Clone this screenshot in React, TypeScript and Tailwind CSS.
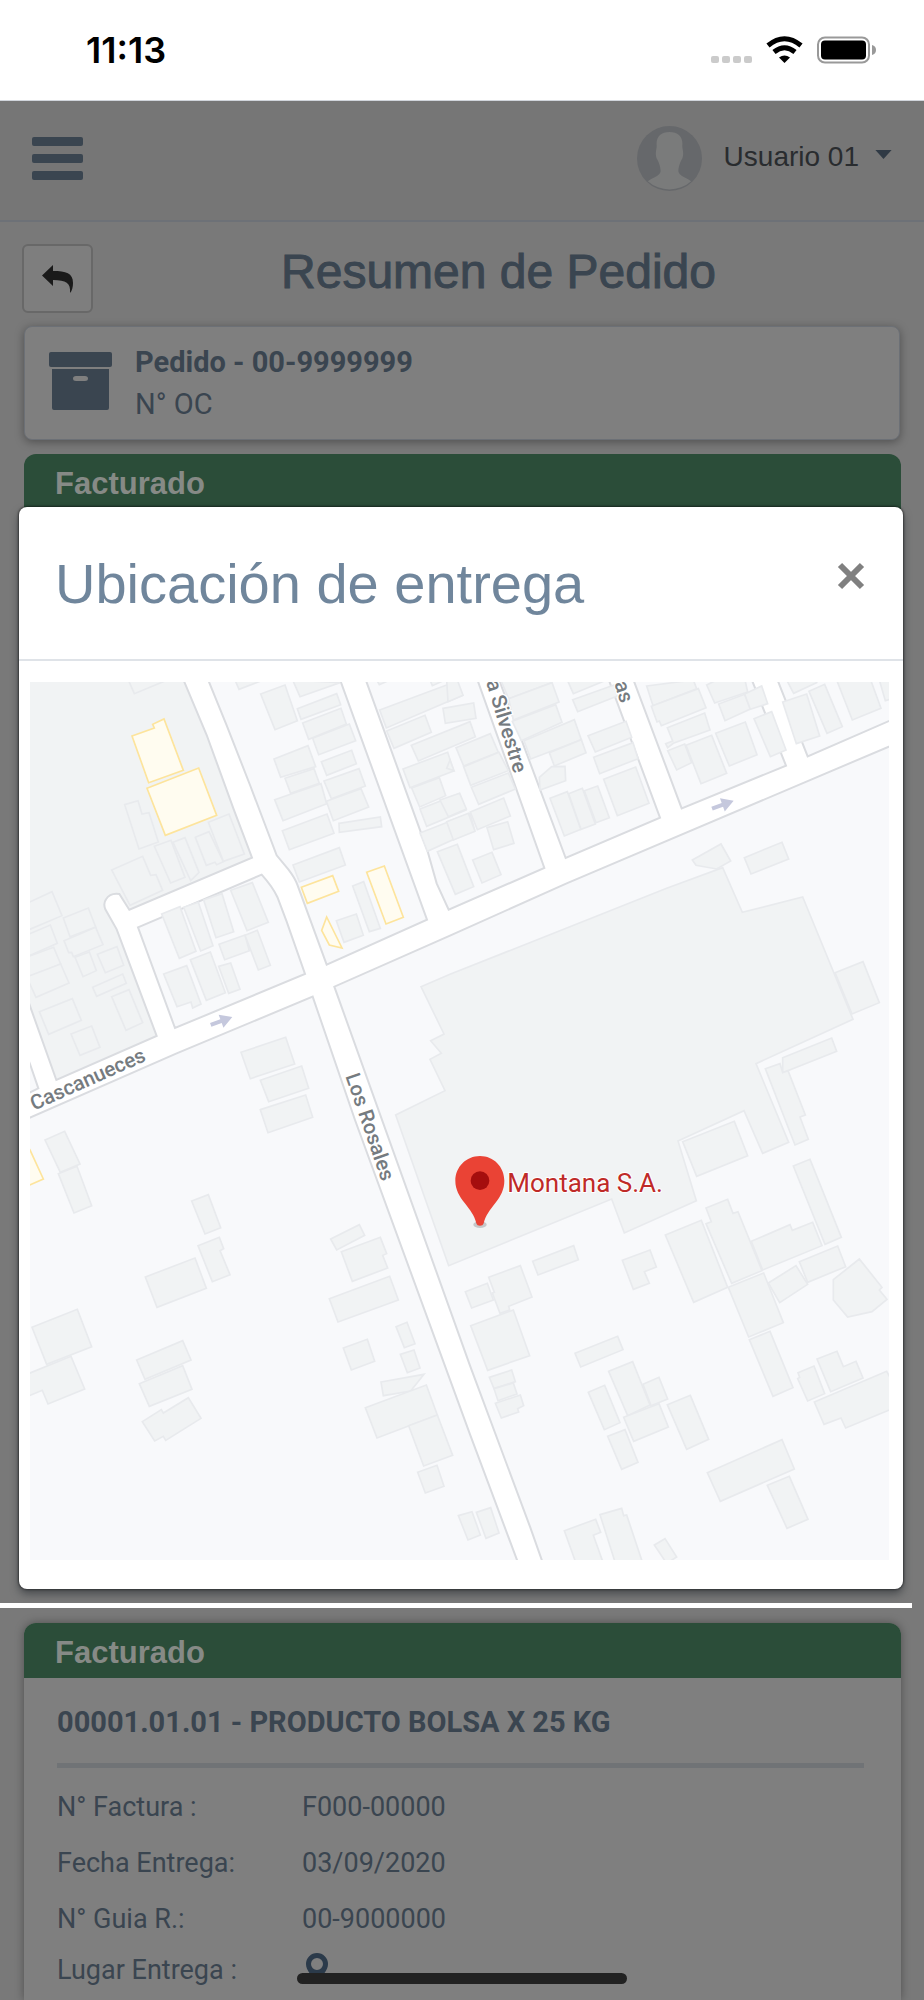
import React from 'react';

// Street blocks of the map; the white between them is the road surface
const blocks = [
  'M-10 -10H460L463 0L530 159L610 379L666 527L298 683L268 636Q240 632 228 652Q219 664 226 682L260 742L380 1062L79 1194L-10 944Z',
];

const lots = [
  'M-10 1120L0 1146L25 1219L-10 1236Z',
  'M324 736L695 578Q728 615 742 645L770 719L825 876L435 1038Z',
  'M533 -10L590 130L660 309L740 520L775 562Q795 588 802 608L890 848L1191 713L929 -10Z',
  'M1006 -10L1192 505L1220 604L1256 683L1543 558L1341 -10Z',
  'M1406 -10L1607 528L1890 407L1735 -10Z',
  'M1809 -10L1955 379L2268 251L2164 -10Z',
  'M2241 -10L2333 223L2600 107V-10Z',
  'M2600 184L1610 604L1260 761L913 914L1320 2051L1500 2534L1541 2650H2600Z',
  'M-10 1311L440 1114L848 944L975 1314L1320 2257L1467 2650H-10Z',
];

const compound =
  'M1173 914L1260 877L1910 619L2078 557L2137 691L2318 645L2469 1012L2178 1145L2276 1381L2198 1414L2142 1286L1944 1377L1999 1556L1783 1653L1745 1551L1256 1751L1097 1299L1245 1226L1200 1132L1234 1114L1202 1076L1242 1056Z';

// Buildings are grouped in four tiles, each one with its own origin
const tiles = [
  {
    x: -30,
    y: -36,
    shapes: [
      'M325 30L343 71L435 33Z',
      'M722 72L795 45L832 152L765 179Z',
      'M645 30L657 58L725 32Z',
      'M818 30L840 80L960 38Z',
      'M832 116L950 71L962 104L843 148Z',
      'M848 159L963 115L979 162L866 208Z',
      'M878 205L988 162L1007 212L896 254Z',
      'M762 267L864 227L887 290L782 322Z',
      'M795 325L882 296L898 340L812 370Z',
      'M904 275L995 241L1009 281L920 316Z',
      'M912 333L1017 296L1036 348L934 386Z',
      'M764 389L903 341L920 401L789 452Z',
      'M919 394L1023 356L1046 411L940 452Z',
      'M787 482L921 432L942 490L808 539Z',
      'M957 460L1081 441L1085 470L958 487Z',
      'M819 585L958 533L976 585L838 636Z',
      'M998 648L1031 635L1081 775L1048 785Z',
      'M949 752L1009 732L1030 796L972 817Z',
      'M314 404L354 392L366 432L387 428L415 516L357 537Z',
      'M275 600L368 559L392 616L408 614L428 661L330 706Z',
      'M403 529L453 511L495 622L452 639Z',
      'M459 517L495 503L537 607L519 625L512 632Z',
      'M526 502L567 485L610 575L590 584L585 577L559 586Z',
      'M565 457L627 432L673 552L610 574Z',
      'M20 700L96 665L126 737L20 782Z',
      'M130 744L205 714L227 771L150 800Z',
      'M20 795L91 765L112 820L20 861Z',
      'M132 812L227 772L249 824L160 860L155 847L146 848Z',
      'M20 861L101 832L122 882L20 923Z',
      'M20 921L122 882L147 939L48 982Z',
      'M165 862L208 846L229 902L189 920Z',
      'M232 853L291 830L311 886L256 908Z',
      'M218 952L308 912L319 940L230 979Z',
      'M58 1025L157 986L184 1051L86 1093Z',
      'M275 980L327 959L368 1058L318 1081Z',
      'M153 1092L215 1068L240 1132L180 1156Z',
      'M425 732L480 710L528 844L478 865Z',
      'M491 712L535 697L579 827L542 843Z',
      'M551 690L606 671L641 785L588 803Z',
      'M632 661L697 638L745 757L681 782Z',
      'M597 823L675 795L688 842L614 869Z',
      'M675 796L712 781L751 886L715 900Z',
      'M431 912L500 887L543 1002L518 1014L513 996L471 1010Z',
      'M511 869L571 846L616 968L559 991Z',
      'M596 889L632 879L660 958L626 970Z',
      'M663 1147L797 1102L824 1182L691 1226Z',
      'M721 1231L845 1188L866 1255L746 1295Z',
      'M721 1319L857 1275L878 1342L744 1388Z',
      'M1070 30L1078 44L1110 30Z',
      'M1079 120L1310 34L1328 76L1099 174Z',
      'M1100 183L1215 136L1234 187L1122 235Z',
      'M1174 226L1350 155L1366 200L1195 273Z',
      'M1149 297L1283 247L1301 303L1170 353Z',
      'M1175 354L1258 323L1277 377L1199 411Z',
      'M1200 417L1318 371L1338 420L1220 469Z',
      'M1200 489L1282 457L1302 508L1222 544Z',
      'M1282 455L1350 430L1364 480L1302 508Z',
      'M1252 545L1312 523L1361 650L1306 673Z',
      'M1230 30L1237 47L1275 30Z',
    ],
  },
  {
    x: 1260,
    y: -36,
    shapes: [
      'M-10 30H22L39 76L-6 95Z',
      'M-21 115L71 99L78 145L-14 160Z',
      'M-10 295L0 270L12 302Z',
      'M18 233L121 191L145 247L41 288Z',
      'M41 290L147 247L175 302L62 346Z',
      'M64 352L175 309L196 357L86 403Z',
      'M61 426L161 384L181 438L82 479Z',
      'M-30 390L29 370L49 417L-5 440Z',
      'M-10 455L55 430L75 484L10 510Z',
      'M111 473L173 455L192 520L131 539Z',
      'M68 570L126 547L153 614L96 639Z',
      'M152 30H300L305 38L176 86Z',
      'M176 86L306 38L327 96L190 150Z',
      'M187 154L317 104L336 157L214 212Z',
      'M222 212L373 149L394 209L242 267Z',
      'M298 248L394 209L408 248L313 288Z',
      'M268 322L305 290L345 289L347 332L270 360Z',
      'M352 30L370 71L470 30Z',
      'M368 89L492 45L502 78L383 125Z',
      'M414 197L528 154L545 202L436 246Z',
      'M431 262L549 218L564 266L449 311Z',
      'M300 385L352 365L393 478L343 498Z',
      'M356 371L397 355L436 462L393 478Z',
      'M403 362L443 348L478 443L438 458Z',
      'M461 328L557 291L597 400L502 437Z',
      'M590 48L730 30L740 56L609 107Z',
      'M604 109L745 56L768 113L634 167L628 153L621 156Z',
      'M652 173L764 129L780 180L670 220L653 233L647 221L668 213Z',
      'M653 242L704 222L725 278L680 300Z',
      'M708 226L785 196L830 310L753 341Z',
      'M797 190L886 156L921 254L838 288Z',
      'M770 45L800 30H885L893 66L794 99Z',
      'M806 102L884 73L901 117L825 152Z',
      'M884 72L935 48L953 101L901 118Z',
      'M912 146L965 125L1008 240L961 260Z',
      'M998 96L1070 72L1109 198L1039 221Z',
      'M1077 64L1124 43L1177 170L1131 190Z',
      'M1010 30L1031 70L1100 38L1095 30Z',
      'M1160 30H1262L1293 115L1207 150Z',
      'M1288 30L1306 92L1330 85V30Z',
      'M727 570L813 522L842 573L800 597L738 586Z',
      'M883 563L996 517L1016 567L903 612Z',
      'M1155 908L1239 875L1288 998L1206 1032Z',
      'M998 1163L1145 1104L1160 1144L998 1208Z',
      'M946 1196L990 1181L998 1208L1014 1202L1066 1335L1050 1341L1075 1408L1035 1425Z',
    ],
  },
  {
    x: -30,
    y: 1254,
    shapes: [
      'M75 120L134 94L180 192L121 217Z',
      'M115 221L171 199L215 317L162 339Z',
      'M515 303L565 284L602 383L555 402Z',
      'M534 437L598 412L611 446L600 452L630 524L577 545Z',
      'M376 531L525 474L559 565L411 622Z',
      'M36 682L172 628L215 740L80 793Z',
      'M20 823L153 769L194 867L84 912L67 871L20 890Z',
      'M350 780L488 722L513 780L375 838Z',
      'M358 851L488 797L516 868L388 919Z',
      'M367 965L424 929L430 939L505 893L543 955L437 1021L430 1009L404 1023Z',
      'M932 417L1018 374L1034 406L950 450Z',
      'M964 455L1081 412L1100 461L1088 466L1103 504L997 544Z',
      'M928 596L1109 529L1135 600L954 666Z',
      'M970 744L1042 718L1064 784L994 810Z',
      'M1128 680L1161 667L1185 731L1153 743Z',
      'M1141 763L1182 750L1200 804L1162 818Z',
      'M1083 846L1212 823L1172 873L1090 887Z',
      'M1036 923L1219 855L1252 945L1071 1014Z',
      'M1166 977L1252 945L1298 1066L1211 1098Z',
      'M1193 1117L1251 1096L1272 1159L1216 1179Z',
    ],
  },
  {
    x: 1260,
    y: 1254,
    shapes: [
      'M698 125L853 64L893 167L740 229Z',
      'M1030 198L1080 178L1174 412L1125 433Z',
      'M768 324L833 298L849 340L864 335L936 512L845 550L768 371L784 365Z',
      'M904 424L1020 374L1027 391L1088 367L1116 437L938 510Z',
      'M646 405L754 361L833 562L731 607Z',
      'M248 484L371 437L385 479L264 525Z',
      'M517 481L600 450L619 501L583 515L598 550L550 568Z',
      'M46 575L112 550L130 600L65 624Z',
      'M116 532L211 497L246 591L176 619L179 630L150 640L127 579L133 577Z',
      'M62 677L190 630L239 767L113 811Z',
      'M118 832L185 810L196 845L132 866Z',
      'M132 866L190 849L201 882L144 902Z',
      'M136 910L211 885L221 917L203 926L206 936L154 954Z',
      'M375 760L503 709L519 749L392 801Z',
      'M835 562L941 519L1000 668L896 711Z',
      'M955 549L1038 497L1073 553L989 608Z',
      'M1048 485L1163 438L1187 500L1073 547Z',
      'M1150 539L1228 477L1296 562L1288 570L1311 598L1266 635L1193 651L1150 600Z',
      'M898 719L960 694L1029 863L969 889Z',
      'M1101 777L1161 754L1180 800L1218 784L1239 834L1142 875Z',
      'M1044 818L1092 798L1124 881L1073 903L1043 836L1049 832Z',
      'M1093 906L1310 814L1330 850V925L1187 984L1173 954L1122 973Z',
      'M415 877L464 856L510 968L463 989Z',
      'M476 814L548 785L600 915L533 947Z',
      'M579 853L627 832L653 897L603 917Z',
      'M521 952L627 911L655 981L551 1024Z',
      'M652 914L721 886L776 1018L710 1048Z',
      'M473 1009L525 989L564 1087L515 1108Z',
      'M772 1118L996 1019L1033 1107L811 1204Z',
      'M952 1156L1018 1129L1074 1258L1011 1285Z',
      'M25 1247L66 1235L91 1305L54 1320Z',
      'M79 1237L122 1223L147 1299L108 1315Z',
      'M343 1292L437 1258L452 1297L430 1306L462 1395H380Z',
      'M450 1244L515 1225L521 1247L530 1245L580 1395H498Z',
      'M613 1335L645 1316L680 1371L650 1390Z',
    ],
  },
];

const yellowShapes = [
  'M306 162L373 138L368 127L402 111L460 265L356 302Z',
  'M351 319L506 258L560 400L406 460Z',
  'M814 616L908 581L926 628L832 664Z',
  'M1010 571L1063 552L1120 706L1068 726Z',
  'M890 705L875 745L898 789L936 798Z',
  'M-10 1388L0 1404L40 1491L-10 1513Z',
];

const details = [
  { label: 'N° Factura :', value: 'F000-00000' },
  { label: 'Fecha Entrega:', value: '03/09/2020' },
  { label: 'N° Guia R.:', value: '00-9000000' },
];

const DirectionArrow = ({ x, y }: { x: number; y: number }) => (
  <path
    d="M-35 -6H-2V-21L34 0L-2 21V6H-35Z"
    fill="#c5c8dd"
    transform={`translate(${x} ${y}) rotate(-20)`}
  />
);

const LocationMap = () => (
  <svg viewBox="0 0 2577 2634" className="block w-full" role="img" aria-label="Mapa de la ubicación">
    <rect width="2577" height="2634" fill="#ffffff" />
    <g stroke="#dadce0" strokeWidth="6">
      {blocks.map((d) => <path key={d} d={d} fill="#f1f3f4" />)}
      {lots.map((d) => <path key={d} d={d} fill="#f8f9fb" />)}
    </g>
    <path d={compound} fill="#f1f3f4" stroke="#e8eaed" strokeWidth="5" />
    {tiles.map((tile) => (
      <g key={`${tile.x}:${tile.y}`} transform={`translate(${tile.x} ${tile.y})`} fill="#f1f3f4" stroke="#e8eaed" strokeWidth="5">
        {tile.shapes.map((d) => <path key={d} d={d} />)}
      </g>
    ))}
    <g fill="#fffcf0" stroke="#fde49c" strokeWidth="5">
      {yellowShapes.map((d) => <path key={d} d={d} />)}
    </g>
    <DirectionArrow x={575} y={1017} />
    <DirectionArrow x={2079} y={368} />
    <g fontFamily="Roboto, sans-serif" fontSize="62" fontWeight="500" fill="#757b80" stroke="#ffffff" strokeWidth="8" paintOrder="stroke">
      <text transform="translate(12 1286) rotate(-24)">Cascanueces</text>
      <text transform="translate(946 1182) rotate(71)">Los Rosales</text>
      <text transform="translate(1452 276) rotate(73)" textAnchor="end">a Silvestre</text>
      <text transform="translate(1772 66) rotate(73)" textAnchor="end">as</text>
    </g>
    <ellipse cx="1350" cy="1628" rx="20" ry="10" fill="#c6c8ca" />
    <path d="M1350 1422C1309 1422 1276 1455 1276 1496C1276 1522 1288 1543 1304 1563C1320 1585 1333 1598 1339 1624C1341 1634 1359 1634 1361 1624C1367 1598 1380 1585 1396 1563C1412 1543 1423 1522 1423 1496C1423 1455 1391 1422 1350 1422Z" fill="#ea4335" />
    <circle cx="1350" cy="1496" r="28" fill="#a50e0e" />
    <text x="1432" y="1531" fontFamily="Roboto, sans-serif" fontSize="78" fill="#bf2a28" stroke="#ffffff" strokeWidth="6" paintOrder="stroke">
      Montana S.A.
    </text>
  </svg>
);

const StatusBar = () => (
  <div className="flex h-[101px] shrink-0 items-center justify-between border-b border-gray-300 bg-white pr-12 pl-[86px]">
    <span className="font-['Inter',sans-serif] text-[36px] font-semibold text-black">11:13</span>
    <svg width="165" height="28" viewBox="0 0 165 28" aria-hidden="true">
      <g fill="#cbcbcb">
        <rect x="0" y="20" width="8" height="7" rx="2" />
        <rect x="11" y="20" width="8" height="7" rx="2" />
        <rect x="22" y="20" width="8" height="7" rx="2" />
        <rect x="33" y="20" width="8" height="7" rx="2" />
      </g>
      <g fill="none" stroke="#000000" strokeWidth="5">
        <path d="M57 9.500Q73.500 -4 90 9.500" />
        <path d="M63 16Q73.500 7.500 84 16" />
      </g>
      <path d="M68 21.500Q73.500 17.500 79 21.500L73.500 27Z" />
      <rect x="107" y="1.500" width="51" height="25" rx="7" fill="none" stroke="#999999" strokeWidth="2" />
      <rect x="110" y="4.500" width="45" height="19" rx="4" />
      <path d="M161 9Q165 10 165 14Q165 18 161 19Z" fill="#999999" />
    </svg>
  </div>
);

const Header = () => (
  <header className="flex h-[121px] shrink-0 items-center justify-between border-b-2 border-[#6d7177] bg-[#767676] pr-8 pb-1 pl-8">
    <button aria-label="Menú" className="flex w-[51px] flex-col gap-2">
      <span className="h-[9px] rounded-xs bg-[#3a4550]" />
      <span className="h-[9px] rounded-xs bg-[#3a4550]" />
      <span className="h-[9px] rounded-xs bg-[#3a4550]" />
    </button>
    <button className="flex items-center">
      <svg width="65" height="65" viewBox="0 0 66 66" aria-hidden="true">
        <circle cx="33" cy="33" r="33" fill="#66686b" />
        <path d="M33 6C24 6 19 11 20 20C20 24 18 27 20 33C22 36 24 42 24 46C23 51 17 52 11 56A33 33 0 0 0 55 56C49 52 43 51 42 46C42 42 44 36 46 33C48 27 46 24 46 20C47 11 42 6 33 6Z" fill="#7a7b7b" />
      </svg>
      <span className="ml-[22px] pb-1 text-[28px] text-[#292c2f]">Usuario 01</span>
      <svg className="mb-2 ml-4" width="17" height="9" viewBox="0 0 18 10" aria-hidden="true">
        <path d="M0 0H18L9 10Z" fill="#303a45" />
      </svg>
    </button>
  </header>
);

const App: React.FC = () => {
  return (
    <div className="flex min-h-screen flex-col bg-[#797979] font-['Liberation_Sans',Arial,sans-serif] text-[#3a4550]">
      <StatusBar />
      <Header />

      <main className="flex flex-1 flex-col">
        <div className="flex items-start pt-[22px] pr-5 pl-[22px]">
          <button aria-label="Volver" className="flex h-[69px] w-[71px] items-center justify-center rounded-md border-2 border-[#686868] bg-[#7e7e7e]">
            <svg width="31" height="28" viewBox="0 0 31 28" aria-hidden="true">
              <path d="M0 10.500L11 0V6C24 6 31 8 31 18C31 22 30 26 28 28C29 18 24 15 11 15V21Z" fill="#1a1a1a" />
            </svg>
          </button>
          <h1 className="flex-1 pt-0.5 text-center text-[48px] leading-[52px] [-webkit-text-stroke:1px_#3a4550]">Resumen de Pedido</h1>
        </div>

        {/* Order card */}
        <section className="mx-6 mt-[13px] flex h-[114px] items-center rounded-lg border border-[#6c7076] bg-[#7f7f7f] px-6 font-['Roboto',sans-serif] shadow-[0_2px_10px_rgba(0,0,0,0.35)]">
          <svg className="mb-1" width="63" height="58" viewBox="0 0 63 58" fill="#3a4550" aria-hidden="true">
            <rect width="63" height="15" rx="2" />
            <path fillRule="evenodd" d="M3 17H60V56Q60 58 58 58H5Q3 58 3 56ZM27 24Q24 24 24 26.500Q24 29 27 29H36Q39 29 39 26.500Q39 24 36 24Z" />
          </svg>
          <div className="ml-[23px] text-[29px] leading-[42px]">
            <p className="font-bold">Pedido - 00-9999999</p>
            <p>N° OC</p>
          </div>
        </section>

        <h2 className="mr-[23px] ml-6 mt-[14px] h-[62px] rounded-t-xl bg-[#2b4d39] pl-[31px] text-[31px] leading-[60px] font-bold text-[#868a86]">Facturado</h2>

        {/* Delivery location dialog */}
        <div
          role="dialog"
          aria-labelledby="dialog-title"
          className="relative z-10 mr-[21px] ml-[19px] -mt-[9px] rounded-lg bg-white pb-[29px] shadow-[0_5px_8px_rgba(40,45,50,0.6),0_0_2px_1px_rgba(0,0,0,0.5)]"
        >
          <div className="flex h-[154px] items-start justify-between border-b-2 border-[#dfe3e8] pr-[37px] pl-9">
            <h2 id="dialog-title" className="pt-[46px] text-[56px] leading-[62px] text-[#70869c]">Ubicación de entrega</h2>
            <button aria-label="Cerrar" className="mt-[55px]">
              <svg width="30" height="28" viewBox="0 0 30 28" stroke="#808080" strokeWidth="6" aria-hidden="true">
                <path d="M4 3L26 25M26 3L4 25" />
              </svg>
            </button>
          </div>
          <div className="pt-[21px] pr-[14px] pl-[11px]">
            <LocationMap />
          </div>
        </div>

        <div className="mt-[14px] mr-3 h-[5px] shrink-0 bg-white" />

        {/* Invoice card */}
        <section className="mr-[23px] ml-6 mt-[15px] flex-1 rounded-t-xl bg-[#7f7f7f] shadow-[0_0_10px_rgba(0,0,0,0.35)]">
          <h2 className="h-[55px] rounded-t-xl bg-[#2b4d39] pl-[31px] text-[31px] leading-[60px] font-bold text-[#868a86]">Facturado</h2>
          <div className="px-[33px] pt-[25px] font-['Roboto',sans-serif]">
            <h3 className="mr-1 border-b-[5px] border-[#707376] pb-[22px] text-[29px] leading-[38px] font-bold">00001.01.01 - PRODUCTO BOLSA X 25 KG</h3>
            <dl className="mt-[11px] text-[27px] leading-[56px]">
              {details.map(({ label, value }) => (
                <div key={label} className="flex">
                  <dt className="w-[245px]">{label}</dt>
                  <dd>{value}</dd>
                </div>
              ))}
              <div className="flex leading-[46px]">
                <dt className="w-[245px]">Lugar Entrega :</dt>
                <dd>
                  <button aria-label="Ver ubicación" className="block pt-1.5 pl-1">
                    <svg width="22" height="30" viewBox="0 0 22 30" aria-hidden="true">
                      <path fillRule="evenodd" d="M11 0A11 11 0 0 0 0 11C0 18 6 22 11 30C16 22 22 18 22 11A11 11 0 0 0 11 0ZM11 5A6 6 0 1 1 11 17A6 6 0 0 1 11 5Z" fill="#2b3a4a" />
                    </svg>
                  </button>
                </dd>
              </div>
            </dl>
          </div>
        </section>
      </main>

      {/* Home indicator */}
      <div className="fixed bottom-4 left-1/2 z-20 h-[11px] w-[330px] -translate-x-1/2 rounded-full bg-[#222222]" />
    </div>
  );
};

export default App;
